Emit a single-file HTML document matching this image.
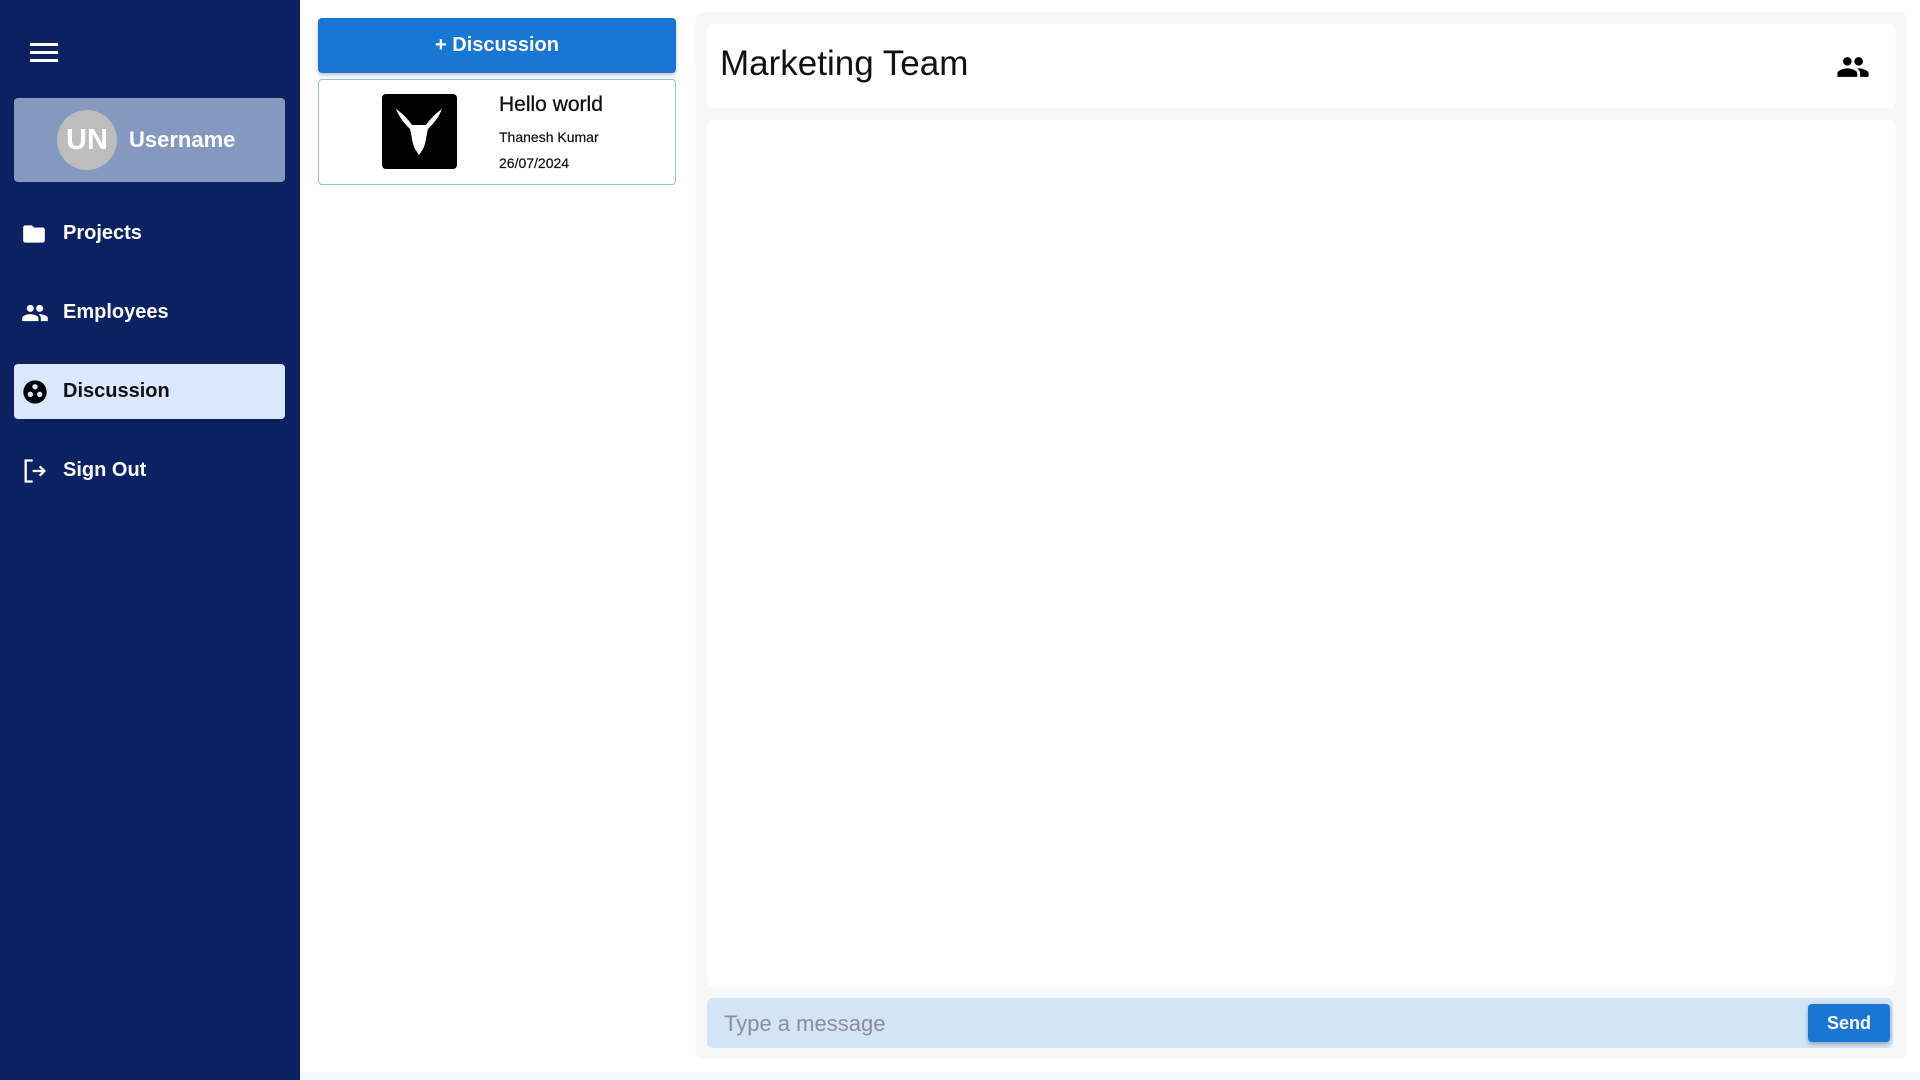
<!DOCTYPE html>
<html><head><meta charset="utf-8"><style>
*{margin:0;padding:0;box-sizing:border-box}
body{width:1920px;height:1080px;overflow:hidden;background:#fff;font-family:"Liberation Sans",sans-serif;position:relative}
.side{position:absolute;left:0;top:0;width:300px;height:1080px;background:#0b2161}
.abs{position:absolute}
.nav{position:absolute;left:14px;width:271px;height:55px;display:flex;align-items:center;color:#fff;font-weight:bold;font-size:20px}
.nav svg{position:absolute;left:7px}
.nav span{position:absolute;left:49px}
</style></head><body>
<div class="side">
  <div class="abs" style="left:30px;top:43px;width:28px;height:3px;background:#fff"></div>
  <div class="abs" style="left:30px;top:51px;width:28px;height:3px;background:#fff"></div>
  <div class="abs" style="left:30px;top:59px;width:28px;height:3px;background:#fff"></div>
  <div class="abs" style="left:14px;top:98px;width:271px;height:84px;background:#8599c0;border-radius:4px"></div>
  <div class="abs" style="left:57px;top:110px;width:60px;height:60px;border-radius:50%;background:#bdbdbd;color:#fff;font-size:29px;font-weight:bold;line-height:60px;text-align:center">UN</div>
  <div class="abs" style="left:129px;top:127px;color:#fff;font-weight:bold;font-size:22px">Username</div>
  <div class="nav" style="top:206px"><svg width="26" height="26" viewBox="0 0 24 24"><path fill="#fff" d="M10 4H4c-1.1 0-2 .9-2 2v12c0 1.1.9 2 2 2h16c1.1 0 2-.9 2-2V8c0-1.1-.9-2-2-2h-8l-2-2z"/></svg><span>Projects</span></div>
  <div class="nav" style="top:285px"><svg width="28" height="28" viewBox="0 0 24 24"><path fill="#fff" d="M16 11c1.66 0 2.99-1.34 2.99-3S17.66 5 16 5s-3 1.34-3 3 1.34 3 3 3zm-8 0c1.66 0 2.99-1.34 2.99-3S9.66 5 8 5 5 6.34 5 8s1.34 3 3 3zm0 2c-2.33 0-7 1.17-7 3.5V19h14v-2.5c0-2.33-4.670-3.5-7-3.5zm8 0c-.29 0-.62.02-.97.05 1.16.84 1.970 1.97 1.97 3.45V19h6v-2.5c0-2.33-4.67-3.5-7-3.5z"/></svg><span>Employees</span></div>
  <div class="nav" style="top:364px;background:#dbe7fd;border-radius:4px;color:#111"><svg width="28" height="28" viewBox="0 0 24 24"><circle cx="12" cy="12" r="10" fill="#000"/><circle cx="12" cy="7.5" r="2.3" fill="#dbe7fd"/><circle cx="8" cy="14" r="2.3" fill="#dbe7fd"/><circle cx="16" cy="14" r="2.3" fill="#dbe7fd"/></svg><span>Discussion</span></div>
  <div class="nav" style="top:443px"><svg width="28" height="28" viewBox="0 0 24 24" fill="none" stroke="#fff" stroke-width="2"><path d="M10 3H4v18h6M10 12h10M16 8l4 4-4 4"/></svg><span>Sign Out</span></div>
</div>
<div class="abs" style="left:318px;top:18px;width:358px;height:55px;background:#1976d2;border-radius:4px;box-shadow:0 2px 4px rgba(0,0,0,.25);color:#fff;font-weight:bold;font-size:20px;line-height:55px;text-align:center">+ Discussion</div>
<div class="abs" style="left:318px;top:79px;width:358px;height:106px;border:1px solid #90bff0;border-radius:4px"></div>
<div class="abs" style="left:382px;top:94px;width:75px;height:75px;background:#000;border-radius:4px">
<svg width="75" height="75" viewBox="0 0 75 75"><path fill="#fff" d="M14 15c4 10 10 16 14 20 2 8 2 14 5 20l4 6 4-6c3-6 3-12 5-20 4-4 10-10 14-20-6 4-12 10-16 16h-14c-4-6-10-12-16-16z"/></svg></div>
<div class="abs" style="left:499px;top:93px;font-size:21px;color:#111;-webkit-text-stroke:0.3px #111">Hello world</div>
<div class="abs" style="left:499px;top:129px;font-size:14px;color:#111;-webkit-text-stroke:0.2px #111">Thanesh Kumar</div>
<div class="abs" style="left:499px;top:155px;font-size:14px;color:#111;-webkit-text-stroke:0.2px #111">26/07/2024</div>
<div class="abs" style="left:695px;top:12px;width:1212px;height:1047px;background:#f7f7f7;border-radius:8px"></div>
<div class="abs" style="left:707px;top:24px;width:1188px;height:84px;background:#fff;border-radius:6px"></div>
<div class="abs" style="left:720px;top:44px;font-size:35px;color:#111">Marketing Team</div>
<svg class="abs" style="left:1836px;top:50px" width="34" height="34" viewBox="0 0 24 24"><path fill="#000" d="M16 11c1.66 0 2.99-1.34 2.99-3S17.66 5 16 5s-3 1.34-3 3 1.34 3 3 3zm-8 0c1.66 0 2.99-1.34 2.99-3S9.66 5 8 5 5 6.34 5 8s1.34 3 3 3zm0 2c-2.33 0-7 1.17-7 3.5V19h14v-2.5c0-2.33-4.67-3.5-7-3.5zm8 0c-.29 0-.62.02-.97.05 1.16.84 1.97 1.97 1.97 3.45V19h6v-2.5c0-2.33-4.67-3.5-7-3.5z"/></svg>
<div class="abs" style="left:707px;top:120px;width:1188px;height:866px;background:#fff;border-radius:6px"></div>
<div class="abs" style="left:707px;top:998px;width:1186px;height:50px;background:#d4e4f7;border-radius:6px"></div>
<div class="abs" style="left:724px;top:1011px;font-size:22px;color:#8a8f96">Type a message</div>
<div class="abs" style="left:1808px;top:1004px;width:82px;height:38px;background:#1976d2;border-radius:4px;box-shadow:0 2px 4px rgba(0,0,0,.3);color:#fff;font-weight:bold;font-size:18px;line-height:38px;text-align:center">Send</div>
<div class="abs" style="left:300px;top:1072px;width:1620px;height:8px;background:#f3f8fe"></div>
</body></html>
